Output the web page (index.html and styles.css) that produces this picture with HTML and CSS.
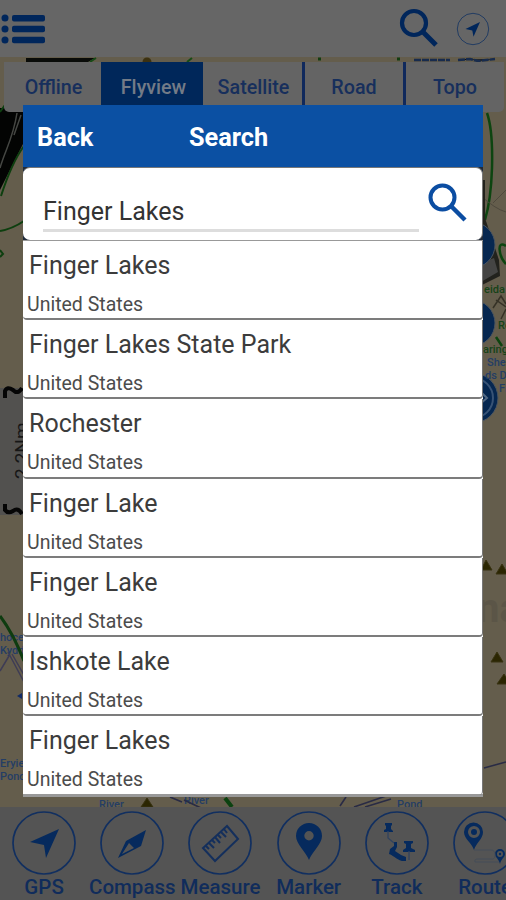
FILE: index.html
```html
<!DOCTYPE html>
<html lang="en">
<head>
<meta charset="utf-8">
<title>Search</title>
<link rel="stylesheet" href="styles.css">
</head>
<body>
<div class="app">
  <svg class="map" viewBox="0 0 506 900" aria-hidden="true">
    <rect width="506" height="900" fill="#645d4c"/>
    <path d="M26 58H95L88 62H26Z" fill="#090b08"/>
    <path d="M90 62l6-4M187 62l5-4" stroke="#164b16" stroke-width="2"/>
    <circle cx="147" cy="62" r="4.5" fill="#3c3110"/>
    <path d="M414 60h36M458 60l12-1 8 2 17-2" stroke="#172b4d" stroke-width="2.5" stroke-dasharray="7 1"/>
    <path d="M318 59h3M397 59h3" stroke="#123d12" stroke-width="3"/>
    <path d="M0 108H24V142L0 190Z" fill="#030403"/>
    <path d="M17 113C13 139 5 150 0 168M21 115L14 135" fill="none" stroke="#454743" stroke-width="1.5"/>
    <path d="M24 146Q12 162 1 196M0 112l5-7M0 231Q12 229 24 221M0 250l3 4-3 3" fill="none" stroke="#0d3f0f" stroke-width="2"/>
    <path d="M487 113Q493 130 492 168Q491 200 485 220M506 246C496 239 499 257 506 264M496 337l6 9" fill="none" stroke="#0d4510" stroke-width="2.5"/>
    <path d="M480 195Q495 209 506 212M493 203L506 190" fill="none" stroke="#4e493d"/>
    <path d="M480 180H485V218L499 260 500 276 480 286Z" fill="#22221d"/>
    <path d="M481 263l13-5 4 14-17 10Z" fill="#454544"/>
    <g fill="#062750" stroke="#4b5560">
      <circle cx="472" cy="245" r="23"/><circle cx="472" cy="323" r="23"/><circle cx="473" cy="398" r="25"/>
    </g>
    <circle cx="473" cy="398" r="20" fill="none" stroke="#385375" stroke-width="2"/>
    <path d="M480 391l7 7-7 6" fill="none" stroke="#536984" stroke-width="2"/>
    <path d="M493 308l8-12 5 8M496 300l10 7M501 319l5-10" fill="none" stroke="#353126" stroke-width="1.5"/>
    <g class="map-label green"><text x="484" y="293">eida</text><text x="498" y="329">Re</text><text x="483" y="353">aring</text></g>
    <g class="map-label"><text x="487" y="366">She</text><text x="485" y="379">ds D</text><text x="499" y="392">Fi</text>
      <text x="0" y="641">hoce</text><text x="0" y="654">Kydd</text><text x="0" y="767">Eryie</text><text x="0" y="780">Pond</text>
      <text x="99" y="808">River</text><text x="184" y="804">River</text><text x="397" y="808">Pond</text></g>
    <path d="M0 388H24V515H0Z" fill="#52514f"/>
    <path d="M5 398V391Q7 386 13 390Q18 395 22 388M5 504V510Q8 514 13 511Q18 507 22 514" fill="none" stroke="#050505" stroke-width="4"/>
    <text class="scale" transform="translate(28 479) rotate(-90)">2.2Nm</text>
    <path d="M0 616Q13 633 24 661" fill="none" stroke="#0e3c10" stroke-width="3"/>
    <path d="M8 652L24 682M12 654L24 675M0 671l9-15" fill="none" stroke="#3e3c55" stroke-width="1.5"/>
    <path d="M17 696l5-3v6Z" fill="#102a66"/>
    <text class="watermark" x="477" y="622">na</text>
    <g class="peaks"><path d="M481 570l5-10 6 10ZM496 574l6-10 6 10ZM491 662l6-10 6 10ZM497 684l7-10 6 10ZM141 807l6-9 6 9Z"/></g>
    <path d="M484 768l22-6M354 807l32-11M365 807l26-8M184 800l17 8M340 806l6-9M170 797l12 5" fill="none" stroke="#292b45" stroke-width="1.6"/>
    <path d="M225 798l7 9" stroke="#0b4210" stroke-width="4"/>
  </svg>

  <header class="topbar">
    <svg class="menu-icon" viewBox="0 0 46 30"><g fill="#00265b"><circle cx="5" cy="4" r="3.5"/><circle cx="5" cy="15" r="3.5"/><circle cx="5" cy="26" r="3.5"/><rect x="12" y="1" width="33" height="6.5" rx="2"/><rect x="12" y="11.8" width="33" height="6.5" rx="2"/><rect x="12" y="22.7" width="33" height="6.5" rx="2"/></g></svg>
    <span class="spacer"></span>
    <svg class="top-search" viewBox="0 0 40 40"><g fill="none" stroke="#00265b"><circle cx="15" cy="15" r="12" stroke-width="4.2"/><path d="M24 24L37 37" stroke-width="5"/></g></svg>
    <svg class="locate" viewBox="0 0 34 34"><circle cx="17" cy="17" r="15.7" fill="none" stroke="#223c62"/><path d="M24 10L9.5 17l6.8 1.4 1.2 6.3Z" fill="#00265b"/></svg>
  </header>

  <nav class="tabs">
    <span class="tab first">Offline</span><span class="tab active">Flyview</span><span class="tab">Satellite</span><span class="tab ruled">Road</span><span class="tab ruled">Topo</span>
  </nav>

  <main class="dialog">
    <div class="dialog-head"><span class="back">Back</span><h1>Search</h1></div>
    <div class="search-wrap"><div class="search-box">
      <div class="query">Finger Lakes</div>
      <svg class="find" viewBox="0 0 40 40"><g fill="none" stroke="#0b4da2"><circle cx="14.5" cy="14.5" r="12" stroke-width="4"/><path d="M23.5 23.5L37 37" stroke-width="4.4"/></g></svg>
    </div></div>
    <ul class="results">
      <li><b>Finger Lakes</b><small>United States</small></li>
      <li><b>Finger Lakes State Park</b><small>United States</small></li>
      <li><b>Rochester</b><small>United States</small></li>
      <li><b>Finger Lake</b><small>United States</small></li>
      <li><b>Finger Lake</b><small>United States</small></li>
      <li><b>Ishkote Lake</b><small>United States</small></li>
      <li><b>Finger Lakes</b><small>United States</small></li>
    </ul>
  </main>

  <footer class="tools">
    <div class="tool"><svg viewBox="0 0 64 64"><circle class="ring" cx="32" cy="32" r="31"/><path class="solid" d="M47 18L18 31l14 3 2 13Z"/></svg><span>GPS</span></div>
    <div class="tool"><svg viewBox="0 0 64 64"><circle class="ring" cx="32" cy="32" r="31"/><path class="solid" fill-rule="evenodd" d="M46 19L41 35 18 47 26 30ZM29 32L22 43 34 37Z"/></svg><span>Compass</span></div>
    <div class="tool"><svg viewBox="0 0 64 64"><circle class="ring" cx="32" cy="32" r="31"/><path class="line" d="M39 15L50 28 27 50 15 37ZM36 18l3 4M33 21l5 5M30 24l3 3M27 26l5 6M24 29l3 3M21 32l5 5M18 35l3 3"/></svg><span>Measure</span></div>
    <div class="tool"><svg viewBox="0 0 64 64"><circle class="ring" cx="32" cy="32" r="31"/><path class="solid" fill-rule="evenodd" d="M32 49C29 41 19 33 19 25a13 13 0 0 1 26 0c0 8-10 16-13 24ZM32 20a4.7 4.7 0 1 0 0 9.4 4.7 4.7 0 0 0 0-9.4Z"/></svg><span>Marker</span></div>
    <div class="tool"><svg viewBox="0 0 64 64"><circle class="ring" cx="32" cy="32" r="31"/><path class="solid" d="M20 12h7v2l-1 1v3l2 2v1h-9v-2l2-1v-3l-1-1ZM39 30h9v2l-2 1v4l4 2v2H38v-2l3-2v-4l-2-1ZM29 31h3v5l-2 4 6 4 5 2v4c-8 1-11-5-17-7l1-5 4-3Z"/><path class="thin" d="M23 20v7l6 5M44 40v9"/></svg><span>Track</span></div>
    <div class="tool"><svg viewBox="0 0 64 64"><circle class="ring" cx="32" cy="32" r="31"/><path class="solid" fill-rule="evenodd" d="M21 39C19 32 11 28 11 21a9.5 9.5 0 0 1 19 0c0 7-7 11-9 18ZM21 15a6 6 0 1 0 0 12 6 6 0 0 0 0-12ZM47 53c-1-5-5-7-5-10a5 5 0 0 1 10 0c0 3-4 5-5 10ZM47 40a3 3 0 1 0 0 6 3 3 0 0 0 0-6Z"/><circle class="solid" cx="21" cy="21" r="3"/><circle class="solid" cx="47" cy="43" r="1.2"/><path class="faint" d="M21 39H38Q42 39 42 44T38 48H25Q21 48 22 51H46"/></svg><span>Route</span></div>
  </footer>
</div>
</body>
</html>
```
FILE: styles.css
```css
* { box-sizing: border-box; }
body { margin: 0; font-family: Roboto, "Liberation Sans", sans-serif; }
.app { position: relative; width: 506px; height: 900px; overflow: hidden; display: flex; flex-direction: column; isolation: isolate; }
.map { position: absolute; inset: 0; z-index: -1; width: 506px; height: 900px; }
.map-label { font: 500 11px Roboto, sans-serif; fill: #243d65; }
.map-label.green { fill: #164318; }
.scale { font: 19px Roboto, sans-serif; fill: #171717; }
.watermark { font: 700 40px Roboto, sans-serif; fill: #5b5547; }
.peaks { fill: #2b2602; stroke: #393312; }

.topbar { height: 57px; flex: none; display: flex; align-items: flex-start; padding: 0 16px 0 0; background: #666; }
.menu-icon { width: 46px; height: 30px; margin-top: 14px; }
.spacer { flex: 1; }
.top-search { width: 40px; height: 40px; margin-top: 8px; }
.locate { width: 34px; height: 34px; margin: 12px 0 0 17px; }

.tabs { height: 50px; flex: none; margin: 5px 2px 0 4px; display: grid; grid-template-columns: 97px 102px 99px 101px 101px; background: #646464; border-radius: 0 0 5px 5px; }
.tab { display: flex; justify-content: center; padding: 14px 0 0 2px; font-size: 19.7px; line-height: 24px; font-weight: 500; color: #172f5c; }
.tab.active { background: #00275a; color: #737b87; padding-left: 3px; }
.tab.ruled { border-left: 3px solid #10295c; padding-left: 0; }

.dialog { position: relative; flex: none; width: 460px; height: 692px; margin: -7px 0 0 23px; background: #fff; }
.dialog-head { height: 62px; display: flex; align-items: center; padding: 2px 14px 0; background: #0b50a3; color: #fff; font-size: 25.3px; font-weight: 700; }
.back { width: 152px; }
h1 { margin: 0; font-size: 25.3px; }
.search-wrap { height: 73px; background: #202b3b; }
.search-box { height: 73px; display: flex; padding: 0 13px 0 20px; background: #fff; border-radius: 7px; border: 1px solid #777; border-width: 1px 1px 0 0; }
.query { width: 376px; height: 64px; padding: 28px 0 0; border-bottom: 3px solid #ddd; font-size: 25px; line-height: 31px; color: #333; margin-right: 9px; }
.find { width: 40px; height: 40px; margin-top: 15px; flex: none; }
.results { height: 557px; margin: 0; padding: 0; list-style: none; background: #fff; border-bottom: 3px solid #999; border-top: 1.5px solid #999; }
.results li { height: 79.2px; padding: 10px 4px 0; border-bottom: 2px solid #7c7c7c; border-right: 1px solid #777; border-radius: 0 0 4px 4px; display: flex; flex-direction: column; }
.results li:last-child { border-bottom: 0; }
.results b { font-size: 25px; line-height: 30px; font-weight: 400; color: #3c3c3c; padding-left: 2px; }
.results small { font-size: 19.5px; line-height: 24px; margin-top: 12px; color: #4c4c4c; }

.tools { flex: none; height: 93px; margin-top: 10px; background: #545454; display: flex; }
.tool { width: 88.2px; flex: none; display: flex; flex-direction: column; align-items: center; padding-top: 4px; font-size: 20.5px; line-height: 24px; font-weight: 500; color: #102c5b; }
.tool svg { width: 64px; height: 64px; flex: none; }
.ring { fill: none; stroke: #112f60; stroke-width: 1.7; }
.solid { fill: #062a5d; }
.line { fill: none; stroke: #142f5c; stroke-width: 2; }
.thin { fill: none; stroke: #31435f; stroke-width: 1.3; }
.faint { fill: none; stroke: #454d58; }
```
